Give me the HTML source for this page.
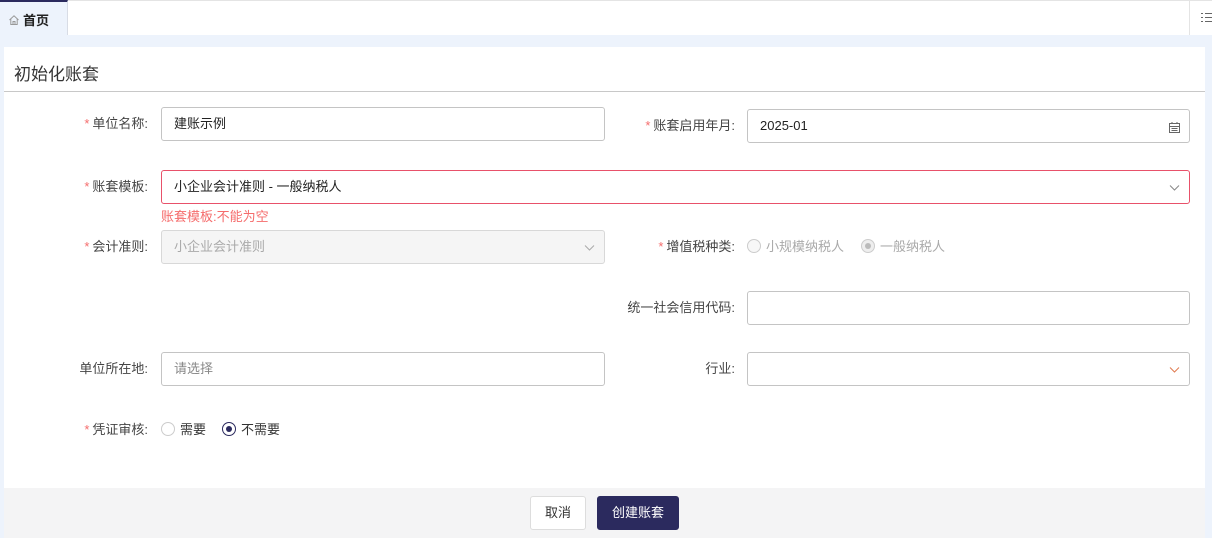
<!DOCTYPE html>
<html><head><meta charset="utf-8"><style>
*{box-sizing:border-box;margin:0;padding:0}
body{width:1212px;height:538px;overflow:hidden;background:#edf3fc;font-family:"Liberation Sans","Noto Sans CJK SC",sans-serif;font-size:13px;color:#333;position:relative}
.top{position:absolute;left:0;top:0;width:1212px;height:35px;background:#fff;border-top:1px solid #e4e4e4}
.tab{position:absolute;left:0;top:0;width:68px;height:35px;background:#edf3fc;border-top:2px solid #2b2a5e;border-right:1px solid #d8dce5;font-size:13px;font-weight:bold;color:#222;padding:8px 0 0 8px}
.rline{position:absolute;left:1189px;top:0;width:1px;height:35px;background:#e4e4e4}
.card{position:absolute;left:4px;top:47px;width:1201px;height:441px;background:#fff}
.title{position:absolute;left:14px;top:60px;font-size:17px;color:#333}
.hr{position:absolute;left:4px;top:91px;width:1201px;height:1px;background:#c8c8c8}
.foot{position:absolute;left:4px;top:488px;width:1201px;height:50px;background:#f4f4f5}
.lbl{position:absolute;text-align:right;font-size:13px;color:#444;line-height:34px}
.lbl i{color:#f56c6c;font-style:normal;margin-right:3px}
.inp{position:absolute;height:34px;border:1px solid #c4c4c4;border-radius:3px;background:#fff;padding-left:12px;line-height:32px;font-size:13px;color:#222}
.ph{color:#888}
.dis{background:#f5f5f5;border-color:#d8d8d8;color:#aaa}
.err{border-color:#e8516a}
.ico{position:absolute;right:8px;top:11px}
.radio{position:absolute;font-size:13px;line-height:34px}
.rc{display:inline-block;width:14px;height:14px;border:1px solid #ccc;border-radius:50%;vertical-align:-2px;margin-right:5px;position:relative;background:#f7f7f7}
.btn{position:absolute;height:34px;border-radius:3px;font-size:13px;line-height:32px;text-align:center}
</style></head><body>
<div class="top"></div>
<div class="tab"><svg width="12" height="12" viewBox="0 0 12 12" style="vertical-align:-1px;margin-right:3px"><path d="M1.5 6L6 1.8 10.5 6M2.8 5v5.5h6.4V5M5 10.5V7.5h2v3" fill="none" stroke="#999" stroke-width="1"/></svg>首页</div>
<div class="rline"></div>
<svg style="position:absolute;left:1201px;top:11px" width="11" height="12"><g stroke="#666" stroke-width="1"><path d="M0 2.5h2M0 6.5h2M0 10.5h2M4 2.5h7M4 6.5h7M4 10.5h7"/></g></svg>
<div class="card"></div>
<div class="title">初始化账套</div>
<div class="hr"></div>
<div class="foot"></div>

<div class="lbl" style="left:40px;top:107px;width:108px"><i>*</i>单位名称:</div>
<div class="inp" style="left:161px;top:107px;width:444px">建账示例</div>
<div class="lbl" style="left:600px;top:109px;width:135px"><i>*</i>账套启用年月:</div>
<div class="inp" style="left:747px;top:109px;width:443px">2025-01<svg class="ico" width="13" height="13" viewBox="0 0 13 13"><g fill="none" stroke="#666"><rect x="1.5" y="2.5" width="10" height="9"/><path d="M1.5 5.5h10M4 1v2M9 1v2M3.5 7.5h6M3.5 9.5h6"/></g></svg></div>

<div class="lbl" style="left:40px;top:170px;width:108px"><i>*</i>账套模板:</div>
<div class="inp err" style="left:161px;top:170px;width:1029px">小企业会计准则 - 一般纳税人<svg class="ico" width="11" height="11" style="right:9px"><path d="M1 3.5l4.5 4.5 4.5-4.5" fill="none" stroke="#888"/></svg></div>
<div style="position:absolute;left:161px;top:206px;font-size:13px;color:#f56c6c">账套模板:不能为空</div>

<div class="lbl" style="left:40px;top:230px;width:108px"><i>*</i>会计准则:</div>
<div class="inp dis" style="left:161px;top:230px;width:444px">小企业会计准则<svg class="ico" width="11" height="11" style="right:9px"><path d="M1 3.5l4.5 4.5 4.5-4.5" fill="none" stroke="#aaa"/></svg></div>
<div class="lbl" style="left:600px;top:230px;width:135px"><i>*</i>增值税种类:</div>
<div class="radio" style="left:747px;top:230px;color:#aaa"><span class="rc"></span>小规模纳税人</div>
<div class="radio" style="left:861px;top:230px;color:#aaa"><span class="rc" style="background:#eee"><span style="position:absolute;left:3px;top:3px;width:6px;height:6px;border-radius:50%;background:#bbb"></span></span>一般纳税人</div>

<div class="lbl" style="left:560px;top:291px;width:175px">统一社会信用代码:</div>
<div class="inp" style="left:747px;top:291px;width:443px"></div>

<div class="lbl" style="left:40px;top:352px;width:108px">单位所在地:</div>
<div class="inp" style="left:161px;top:352px;width:444px"><span class="ph">请选择</span></div>
<div class="lbl" style="left:600px;top:352px;width:135px">行业:</div>
<div class="inp" style="left:747px;top:352px;width:443px"><svg class="ico" width="11" height="11" style="right:9px"><path d="M1 3.5l4.5 4.5 4.5-4.5" fill="none" stroke="#e07b50"/></svg></div>

<div class="lbl" style="left:40px;top:413px;width:108px"><i>*</i>凭证审核:</div>
<div class="radio" style="left:161px;top:413px"><span class="rc" style="background:#fff"></span>需要</div>
<div class="radio" style="left:222px;top:413px"><span class="rc" style="background:#fff;border-color:#2b2a5e"><span style="position:absolute;left:3px;top:3px;width:6px;height:6px;border-radius:50%;background:#2b2a5e"></span></span>不需要</div>

<div class="btn" style="left:530px;top:496px;width:56px;background:#fff;border:1px solid #ddd;color:#333">取消</div>
<div class="btn" style="left:597px;top:496px;width:82px;background:#2b2a5e;border:1px solid #2b2a5e;color:#fff">创建账套</div>
</body></html>
